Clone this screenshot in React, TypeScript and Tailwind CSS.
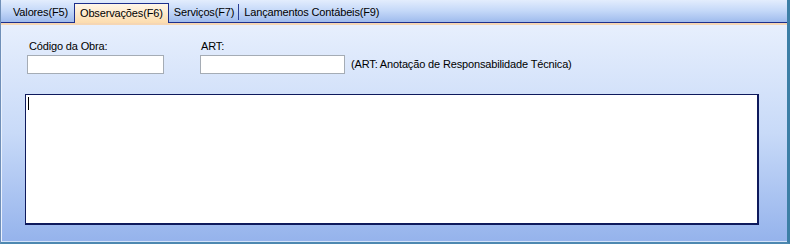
import React from 'react';

const tabs = [
  { label: 'Valores(F5)', active: false },
  { label: 'Observações(F6)', active: true },
  { label: 'Serviços(F7)', active: false },
  { label: 'Lançamentos Contábeis(F9)', active: false },
];

const App: React.FC = () => {
  return (
    <div
      className="w-[790px] h-[244px] flex flex-col text-[11px] tracking-[-0.15px] text-black overflow-hidden border-l border-l-[#6f8fb8] border-r-[3px] border-r-[#3d7fa6] border-b-2 border-b-[#4d88b0]"
      style={{ fontFamily: '"Liberation Sans", Arial, sans-serif' }}
    >
      {/* tab strip */}
      <div className="h-[23px] flex items-end pl-[2px] bg-gradient-to-b from-[#e3edfd] via-[#c4d8f8] to-[#9fbbed] border-b border-b-[#1c2e8c]">
        {tabs.map((t, i) => (
          <div key={i} className="flex items-end h-full">
            {t.active ? (
              <div className="h-[20px] -mb-px px-[5px] flex items-center border border-[#1c2e8c] border-b-0 bg-gradient-to-b from-[#fff6e8] to-[#fcdcae]">
                {t.label}
              </div>
            ) : (
              <div className="h-[20px] flex items-center">
                {i > 0 && !tabs[i - 1].active && <div className="w-px h-[16px] bg-[#2a3f96] mr-[5px]" />}
                <div className={i === 0 ? 'pl-[10px] pr-[6px]' : i > 0 && tabs[i - 1].active ? 'pl-[5px] pr-[4px]' : 'pr-[6px]'}>
                  {t.label}
                </div>
              </div>
            )}
          </div>
        ))}
      </div>
      <div className="h-[2px] bg-[#f5d6b4]" />

      {/* content */}
      <div className="flex-1 flex flex-col bg-gradient-to-b from-[#e7effd] via-[#c8daf8] to-[#95b3ec] pl-[23px] pr-[29px] pt-[15px] border-l border-l-[#eaf1fd] border-b border-b-[#d4e3f9]">
        <div className="flex items-end">
          <div className="flex flex-col ml-[2px]">
            <span className="ml-[2px] leading-[13px] mb-[2px]">Código da Obra:</span>
            <div className="w-[137px] h-[19px] bg-white border border-[#a5acb5]" />
          </div>
          <div className="flex flex-col ml-[36px]">
            <span className="ml-[1px] leading-[13px] mb-[2px]">ART:</span>
            <div className="w-[145px] h-[19px] bg-white border border-[#a5acb5]" />
          </div>
          <span className="ml-[6px] mb-[3px] leading-[13px]">(ART: Anotação de Responsabilidade Técnica)</span>
        </div>
        <div className="mt-[20px] w-[734px] h-[131px] bg-white border-2 border-[#0e1a5c] border-t-[1px] border-l-[1px] pl-[2px] pt-[2px]">
          <div className="w-px h-[13px] bg-black" />
        </div>
      </div>
    </div>
  );
};

export default App;
